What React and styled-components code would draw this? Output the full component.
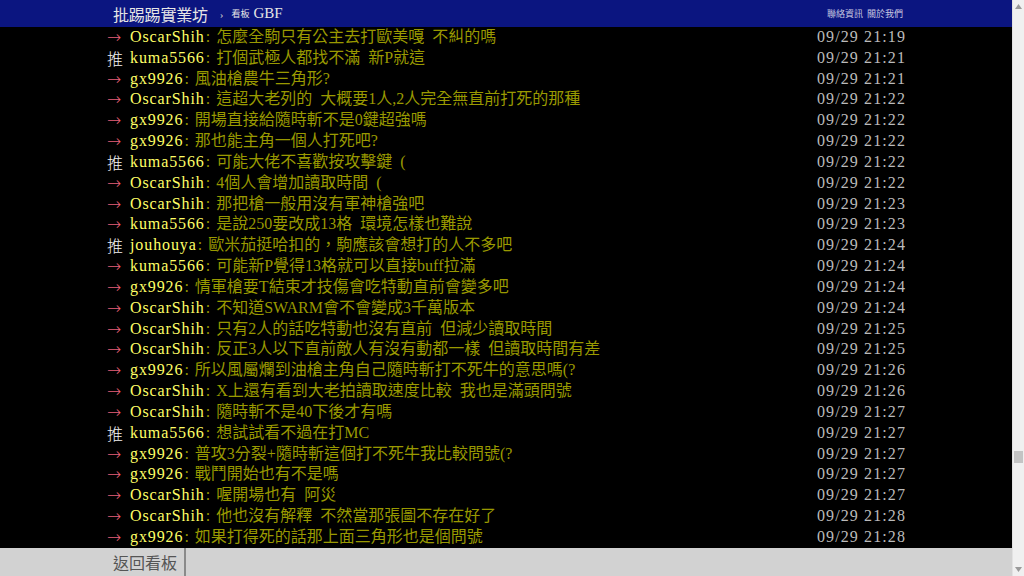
import React from "react";
import styled, { createGlobalStyle } from "styled-components";

const GlobalStyle = createGlobalStyle`
  html, body {
    margin: 0;
    padding: 0;
    background: #000;
    overflow: hidden;
  }
`;

const Page = styled.div`
  display: flex;
  width: 1024px;
  height: 576px;
  font-family: "Liberation Serif", "Noto Sans CJK TC", serif;
`;

const Main = styled.div`
  flex: 1;
  display: flex;
  flex-direction: column;
  min-width: 0;
  background: #000;
`;

const TopBar = styled.div`
  height: 27px;
  flex-shrink: 0;
  background: #0b1580;
`;

const Container = styled.div`
  width: 800px;
  margin: 0 auto;
`;

const TopInner = styled(Container)`
  height: 100%;
  display: flex;
  align-items: center;
  color: #e6e6e6;
`;

const SiteTitle = styled.span`
  margin-left: 7px;
  font-size: 16px;
  font-family: "Noto Sans CJK TC", serif;
  letter-spacing: -0.2px;
`;

const Crumb = styled.span`
  margin-left: 12px;
  font-size: 11px;
  color: #ccc;
`;

const BoardLabel = styled.span`
  margin-left: 8px;
  font-size: 9px;
  font-family: "Noto Sans CJK TC", sans-serif;
`;

const BoardName = styled.span`
  margin-left: 4px;
  font-size: 15px;
`;

const TopLinks = styled.div`
  margin-left: auto;
  margin-right: 3px;
  display: flex;
  gap: 4px;
  font-size: 9px;
  font-family: "Noto Sans CJK TC", sans-serif;
  color: #c8c8e0;
`;

const List = styled(Container)`
  flex: 1;
  overflow: hidden;
`;

const Push = styled.div`
  display: flex;
  height: 20.83px;
  line-height: 20.83px;
  font-size: 16px;
  white-space: nowrap;
`;

const Tag = styled.span`
  width: 24px;
  flex-shrink: 0;
  padding-left: 1px;
  box-sizing: border-box;
  color: ${(p) => (p.$good ? "#f4f4f4" : "#e8607a")};
  font-family: ${(p) =>
    p.$good ? '"Noto Sans CJK TC", sans-serif' : '"DejaVu Sans", sans-serif'};
  font-size: ${(p) => (p.$good ? "16px" : "17px")};
  font-weight: 300;
`;

const UserId = styled.span`
  color: #ff6;
  letter-spacing: 0.9px;
`;

const Content = styled.span`
  color: #990;
  flex: 1;
  word-spacing: 4px;
`;

const Colon = styled.span`
  margin: 0 6px 0 1px;
`;

const Time = styled.span`
  color: #bbb;
  letter-spacing: 1.1px;
`;

const NavBar = styled.div`
  height: 28px;
  flex-shrink: 0;
  background: #d2d2d2;
  display: flex;
`;

const NavItem = styled.div`
  width: 186px;
  padding-left: 113px;
  box-sizing: border-box;
  border-right: 2px solid #8a8a8a;
  font-size: 16px;
  line-height: 28px;
  color: #555;
  font-family: "Noto Sans CJK TC", sans-serif;
`;

const Scrollbar = styled.div`
  width: 12px;
  flex-shrink: 0;
  background: #f0f0f0;
  border-left: 1px solid #e2e2e2;
  display: flex;
  flex-direction: column;
  align-items: center;
  justify-content: space-between;
  padding: 4px 0;
  box-sizing: border-box;
`;

const Track = styled.div`
  flex: 1;
  width: 100%;
  display: flex;
  flex-direction: column;
  align-items: center;
  padding-top: 442px;
`;

const Thumb = styled.div`
  width: 9px;
  height: 12px;
  background: #c4c4c4;
`;

const Arrow = ({ down }) => (
  <svg width="7" height="5" viewBox="0 0 7 5">
    <path d={down ? "M0 0h7L3.5 5z" : "M3.5 0L7 5H0z"} fill="#9a9a9a" />
  </svg>
);

const rows = [
  ["→", "OscarShih", "怎麼全駒只有公主去打歐美嘎 不糾的嗎", "21:19"],
  ["推", "kuma5566", "打個武極人都找不滿 新P就這", "21:21"],
  ["→", "gx9926", "風油槍農牛三角形?", "21:21"],
  ["→", "OscarShih", "這超大老列的 大概要1人,2人完全無直前打死的那種", "21:22"],
  ["→", "gx9926", "開場直接給隨時斬不是0鍵超強嗎", "21:22"],
  ["→", "gx9926", "那也能主角一個人打死吧?", "21:22"],
  ["推", "kuma5566", "可能大佬不喜歡按攻擊鍵 (", "21:22"],
  ["→", "OscarShih", "4個人會增加讀取時間 (", "21:22"],
  ["→", "OscarShih", "那把槍一般用沒有軍神槍強吧", "21:23"],
  ["→", "kuma5566", "是說250要改成13格 環境怎樣也難說", "21:23"],
  ["推", "jouhouya", "歐米茄挺哈扣的，駒應該會想打的人不多吧", "21:24"],
  ["→", "kuma5566", "可能新P覺得13格就可以直接buff拉滿", "21:24"],
  ["→", "gx9926", "情軍槍要T結束才技傷會吃特動直前會變多吧", "21:24"],
  ["→", "OscarShih", "不知道SWARM會不會變成3千萬版本", "21:24"],
  ["→", "OscarShih", "只有2人的話吃特動也沒有直前 但減少讀取時間", "21:25"],
  ["→", "OscarShih", "反正3人以下直前敵人有沒有動都一樣 但讀取時間有差", "21:25"],
  ["→", "gx9926", "所以風屬爛到油槍主角自己隨時斬打不死牛的意思嗎(?", "21:26"],
  ["→", "OscarShih", "X上還有看到大老拍讀取速度比較 我也是滿頭問號", "21:26"],
  ["→", "OscarShih", "隨時斬不是40下後才有嗎", "21:27"],
  ["推", "kuma5566", "想試試看不過在打MC", "21:27"],
  ["→", "gx9926", "普攻3分裂+隨時斬這個打不死牛我比較問號(?", "21:27"],
  ["→", "gx9926", "戰鬥開始也有不是嗎", "21:27"],
  ["→", "OscarShih", "喔開場也有 阿災", "21:27"],
  ["→", "OscarShih", "他也沒有解釋 不然當那張圖不存在好了", "21:28"],
  ["→", "gx9926", "如果打得死的話那上面三角形也是個問號", "21:28"],
];

export default function App() {
  return (
    <>
      <GlobalStyle />
      <Page>
        <Main>
          <TopBar>
            <TopInner>
              <SiteTitle>批踢踢實業坊</SiteTitle>
              <Crumb>›</Crumb>
              <BoardLabel>看板</BoardLabel>
              <BoardName>GBF</BoardName>
              <TopLinks>
                <span>聯絡資訊</span>
                <span>關於我們</span>
              </TopLinks>
            </TopInner>
          </TopBar>
          <List>
            {rows.map(([tag, user, text, time], i) => (
              <Push key={i}>
                <Tag $good={tag === "推"}>{tag}</Tag>
                <UserId>{user}</UserId>
                <Content>
                  <Colon>:</Colon>
                  {text}
                </Content>
                <Time>09/29 {time}</Time>
              </Push>
            ))}
          </List>
          <NavBar>
            <NavItem>返回看板</NavItem>
          </NavBar>
        </Main>
        <Scrollbar>
          <Arrow />
          <Track>
            <Thumb />
          </Track>
          <Arrow down />
        </Scrollbar>
      </Page>
    </>
  );
}
